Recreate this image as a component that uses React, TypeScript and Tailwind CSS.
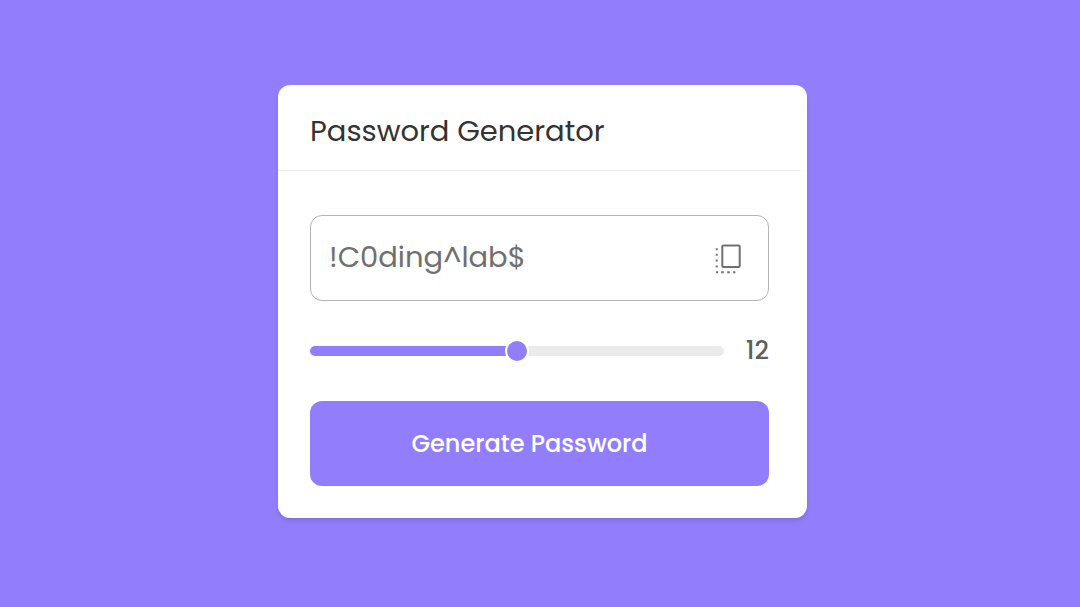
import { useState } from "react";

const CHARS = "ABCDEFGHIJKLMNOPQRSTUVWXYZabcdefghijklmnopqrstuvwxyz0123456789!@#$%^&*";

function CopyIcon() {
  return (
    <svg viewBox="0 0 26 31" className="h-[31px] w-[26px]" fill="none" stroke="#707070" strokeWidth="2" aria-hidden="true">
      <rect x="7.3" y="2.5" width="17.4" height="21.6" rx="1" />
      <path d="M1.7 5.2v2M1.7 10.8v2M1.7 16.5v2M1.7 22.5v2M1 29.3h2M6.2 29.3h2.6M12.2 29.3h2.6M18.2 29.3h2.2" />
    </svg>
  );
}

export default function App() {
  const [length, setLength] = useState(12);
  const [password, setPassword] = useState("!C0ding^lab$");
  const min = 4;
  const max = 20;
  const percent = ((length - min) / (max - min)) * 100;

  const generate = () =>
    setPassword(Array.from({ length }, () => CHARS[Math.floor(Math.random() * CHARS.length)]).join(""));

  return (
    <div className="flex min-h-screen items-center justify-center bg-[#927efd] pr-4 pb-1 pl-[21px] font-[Poppins,Lato,sans-serif]">
      <main className="w-full max-w-[529px] rounded-xl bg-white shadow-md">
        <h1 className="mr-1.5 border-b border-[#ececec] px-8 pt-7 pb-[21px] text-[29px] leading-9 text-[#333]">
          Password Generator
        </h1>
        <div className="pt-11 pr-[38px] pb-8 pl-8">
          <div className="flex h-[86px] items-center rounded-xl border border-[#b4b4b4] pr-[27px] pl-[18px]">
            <input
              aria-label="Generated password"
              readOnly
              value={password}
              className="min-w-0 flex-1 bg-transparent text-[29px] text-[#707070] outline-none"
            />
            <button type="button" aria-label="Copy password" onClick={() => navigator.clipboard?.writeText(password)}>
              <CopyIcon />
            </button>
          </div>
          <div className="mt-8 flex h-9 items-center justify-between gap-[22px]">
            <input
              type="range"
              aria-label="Password length"
              min={min}
              max={max}
              value={length}
              onChange={(e) => setLength(Number(e.target.value))}
              style={{ backgroundImage: `linear-gradient(to right, #927efd ${percent}%, #ebebeb ${percent}%)` }}
              className="h-2.5 min-w-0 flex-1 appearance-none rounded-full [&::-webkit-slider-thumb]:size-6 [&::-webkit-slider-thumb]:appearance-none [&::-webkit-slider-thumb]:rounded-full [&::-webkit-slider-thumb]:border-2 [&::-webkit-slider-thumb]:border-white [&::-webkit-slider-thumb]:bg-[#927efd]"
            />
            <output className="text-[25px] font-medium text-[#5f5f5f]">{length}</output>
          </div>
          <button
            type="button"
            onClick={generate}
            className="mt-8 h-[85px] w-full rounded-xl bg-[#927efd] pr-5 text-[24px] font-medium text-white"
          >
            Generate Password
          </button>
        </div>
      </main>
    </div>
  );
}
